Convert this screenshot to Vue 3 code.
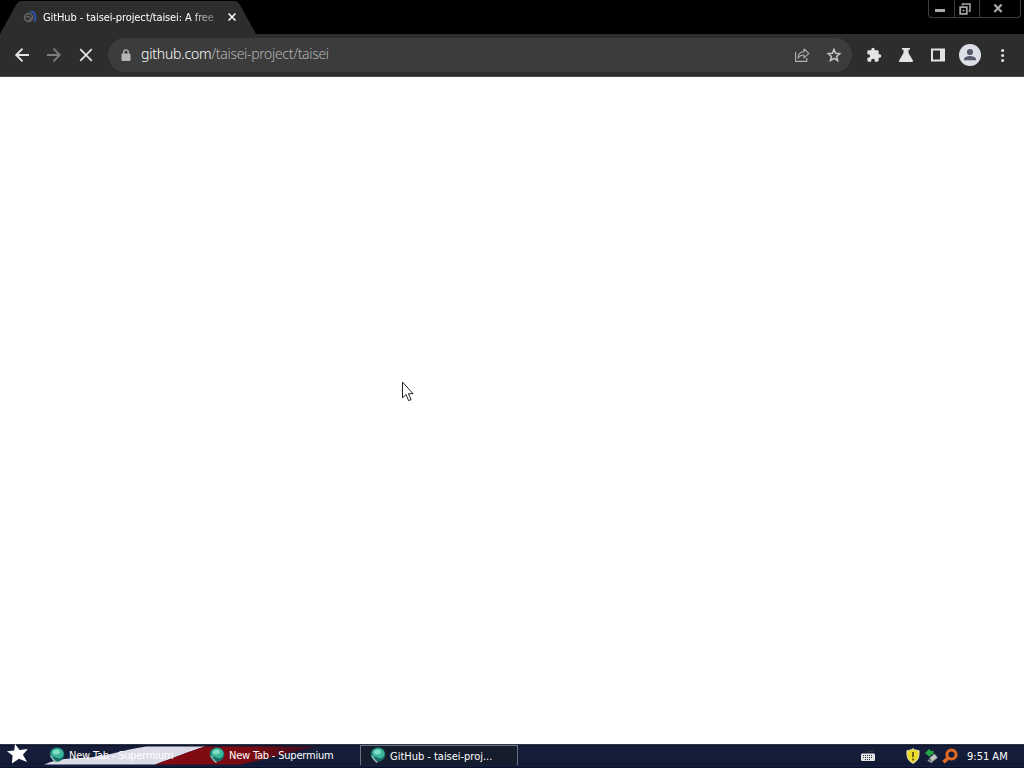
<script setup>
const tasks = [
  { title: 'New Tab - Supermium', active: false },
  { title: 'New Tab - Supermium', active: false },
  { title: 'GitHub - taisei-proj...', active: true },
]
</script>

<template>
  <div class="desktop">
    <header class="titlebar">
      <div class="tab">
        <svg class="tab-shape" width="256" height="34" viewBox="0 0 256 34">
          <path d="M0 34 16 5Q18 1 22 1H234Q238 1 240 5L256 34Z" fill="#2d2d2d" />
        </svg>
        <svg class="favicon" width="14" height="14" viewBox="0 0 14 14" fill="none">
          <circle cx="5.500" cy="7.500" r="4" stroke="#6c6c6c" stroke-width="1.400" />
          <path d="M3 7.500 5 6l1.500 1.500 2 .5L6 10.500" stroke="#6c6c6c" stroke-width="1.200" />
          <path d="M7.500 1.500C11.500 1.500 13.500 6 11.600 11.500" stroke="#2c54ae" stroke-width="2" />
        </svg>
        <span class="tab-title">GitHub - taisei-project/taisei: A free</span>
        <svg class="tab-close" width="10" height="10" viewBox="0 0 10 10">
          <path d="M1.500 1.500l7 7M8.500 1.500l-7 7" stroke="#f2f2f2" stroke-width="1.700" />
        </svg>
      </div>
      <div class="controls">
        <div class="control min"><i></i></div>
        <div class="control restore">
          <svg width="12" height="12" viewBox="0 0 12 12" fill="none" stroke="#a5a5a5">
            <path d="M3.500 2.500V1H11V8H9.500" stroke-width="1.500" />
            <path d="M1.200 4.200h6.600v6.600H1.200z" stroke-width="1.800" />
            <path d="M4 7h1v1H4z" stroke-width="1" />
          </svg>
        </div>
        <div class="control close">
          <svg width="10" height="9" viewBox="0 0 10 9">
            <path d="M1.400.5l7.200 7.600M8.600.5 1.400 8.100" stroke="#aaa" stroke-width="2.200" />
          </svg>
        </div>
      </div>
    </header>

    <nav class="toolbar">
      <svg class="nav" width="16" height="16" viewBox="0 0 16 16" fill="none" stroke="#e4e4e4" stroke-width="1.900">
        <path d="M15 8H2.500M8.500 1.700 2.200 8l6.300 6.300" />
      </svg>
      <svg class="nav" width="16" height="16" viewBox="0 0 16 16" fill="none" stroke="#7d7d7d" stroke-width="1.900">
        <path d="M1 8h12.500M7.500 1.700 13.800 8l-6.300 6.300" />
      </svg>
      <svg class="nav" width="16" height="16" viewBox="0 0 16 16" stroke="#e4e4e4" stroke-width="1.700">
        <path d="M2.200 2.200l11.600 11.600M13.800 2.200 2.200 13.800" />
      </svg>
      <div class="omnibox">
        <svg class="lock" width="10" height="13" viewBox="0 0 10 13">
          <rect x=".5" y="4.500" width="9" height="7.500" rx="1" fill="#b5b5b5" />
          <path d="M2.700 5V3.200a2.300 2.300 0 0 1 4.600 0V5" fill="none" stroke="#b5b5b5" stroke-width="1.300" />
        </svg>
        <span class="url"><b>github.com</b><span class="path">/taisei-project/taisei</span></span>
        <svg class="share" width="16" height="16" viewBox="0 0 16 16" fill="none" stroke="#b0b0b0" stroke-width="1.100">
          <path d="M1.600 5v9.400h11.200V11" />
          <path d="M4 11.200C4 7.200 6 5 10 4.800V2l4.800 4.400-4.800 4.400V8C7.300 8 5.400 9 4 11.200Z" stroke-linejoin="round" />
        </svg>
        <svg class="star" width="16" height="16" viewBox="0 0 16 16" fill="none" stroke="#c6c6c6" stroke-width="1.500">
          <path d="M8 2.500l1.600 3.800 4.200.4-3.200 2.800 1 4.100L8 11.400l-3.600 2.200 1-4.100-3.200-2.800 4.200-.4Z" />
        </svg>
      </div>
      <svg class="tool puzzle" width="16" height="16" viewBox="0 0 24 24" fill="#e4e4e4">
        <path d="M20.500 11H19V7a2 2 0 0 0-2-2h-4V3.500a2.500 2.500 0 0 0-5 0V5H4a2 2 0 0 0-2 2v3.800h1.500a2.700 2.700 0 0 1 0 5.400H2V20a2 2 0 0 0 2 2h3.800v-1.500a2.700 2.700 0 0 1 5.400 0V22H17a2 2 0 0 0 2-2v-4h1.500a2.500 2.500 0 0 0 0-5Z" />
      </svg>
      <svg class="tool" width="16" height="16" viewBox="0 0 16 16" fill="#e4e4e4">
        <path d="M4 1h8v1.800h-1.500V6l4.300 7.200c.5.900 0 1.800-1 1.800H2.200c-1 0-1.500-.9-1-1.800L5.500 6V2.800H4Z" />
      </svg>
      <svg class="tool" width="16" height="16" viewBox="0 0 16 16">
        <path fill="#e4e4e4" fill-rule="evenodd" d="M1 1.500h14v13H1ZM3 3.500v9h7v-9Z" />
      </svg>
      <svg class="avatar" width="22" height="22" viewBox="0 0 22 22">
        <circle cx="11" cy="11" r="11" fill="#dcdfe8" />
        <circle cx="11" cy="8" r="3.100" fill="#535969" />
        <path d="M5 16.300v-1.100c0-2 3.700-3.200 6-3.200s6 1.200 6 3.200v1.100Z" fill="#535969" />
      </svg>
      <svg class="more" width="4" height="16" viewBox="0 0 4 16" fill="#e4e4e4">
        <circle cx="1.600" cy="3.500" r="1.500" /><circle cx="1.600" cy="8.500" r="1.500" /><circle cx="1.600" cy="13.500" r="1.500" />
      </svg>
    </nav>

    <main class="page">
      <svg class="cursor" width="13" height="21" viewBox="0 0 13 21">
        <path d="M1.500 1v16l3.500-3.500L7.600 19.600l2.500-1-2.700-5.900H12Z" fill="#fff" stroke="#222" stroke-width="1" />
      </svg>
    </main>

    <footer class="taskbar">
      <svg class="flag" width="360" height="24" viewBox="0 0 360 24">
        <defs>
          <linearGradient id="fade" x1="0" x2="1">
            <stop offset="0" stop-color="#850a12" />
            <stop offset=".6" stop-color="#780a12" />
            <stop offset="1" stop-color="#321022" />
          </linearGradient>
        </defs>
        <path d="M44 20.500C58 15 66 14.500 82 14C108 12.500 122 6 146 2.500H205C190 7 174 14 155 20.500Z" fill="#dcdce8" />
        <path d="M155 20.500C174 14 190 7 205 2.500H318C294 7 272 14 240 20.500Z" fill="url(#fade)" />
        <path d="M15 0l4.600 6 8.200-1-4.900 5.800 4.200 7.200-8.200-3.200-7 4.600.7-7.900-5.600-4.200 7.200-.7Z" fill="#fff" />
      </svg>
      <div class="tasks">
        <div v-for="(task, i) in tasks" :key="i" class="task" :class="{ active: task.active }">
          <svg width="16" height="17" viewBox="0 0 16 17">
            <circle cx="8" cy="7.500" r="7.300" fill="#176b65" />
            <path d="M2 5C5 0 13 0 14.500 6c0 4-3 6.500-6 5L3 9Z" fill="#3bb59c" />
            <path d="M4 4.500c2-3 7-2.500 7 1-1 2.500-5 2.500-7 1Z" fill="#80dfc3" />
            <path d="M1.500 9c2 .5 2.500 5 6 6.500" fill="none" stroke="#a0bdbc" stroke-width="1.300" />
          </svg>
          <span>{{ task.title }}</span>
        </div>
      </div>
      <div class="tray">
        <svg class="keyboard" width="14" height="13" viewBox="0 0 14 13">
          <path d="M7 5V2.500h5V0" stroke="#30343f" fill="none" />
          <rect y="4.500" width="14" height="7.500" rx="1" fill="#e4e4e4" />
          <path d="M2 6.500h10M2 8.500h10M4 10.500h6" stroke="#333844" stroke-dasharray="1 1" />
        </svg>
        <svg class="shield" width="14" height="16" viewBox="0 0 14 16">
          <path d="M7 .7c2 1.500 4 1.800 6 1.800C13.500 9 12 13 7 15.300 2 13 .5 9 1 2.500 3 2.500 5 2.200 7 .7Z" fill="#eadb28" stroke="#e5e3ba" />
          <path d="M7 4v5M7 10.500v2" stroke="#494414" stroke-width="1.600" />
        </svg>
        <svg class="usb" width="14" height="16" viewBox="0 0 14 16">
          <path d="M4.500 10l5-4 3 3.500-5.500 4.500Z" fill="#c6cbc8" stroke="#727d80" />
          <path d="M3 12l4 2.500" stroke="#8a9698" stroke-width="2" />
          <path d="M0 5 4.500.8 5.500 3H8.500v3.500H6L5 9Z" fill="#29a943" />
        </svg>
        <svg class="search" width="16" height="16" viewBox="0 0 16 16" fill="none" stroke="#e06a22">
          <circle cx="9.500" cy="6.500" r="4.600" stroke-width="3" />
          <path d="M6 10 1.500 14.300" stroke-width="3.600" />
        </svg>
        <span class="clock">9:51 AM</span>
      </div>
    </footer>
  </div>
</template>

<style>
body { margin: 0; overflow: hidden; }
</style>

<style scoped>
* { box-sizing: border-box; }
.desktop {
  width: 1024px; height: 768px;
  display: flex; flex-direction: column;
  background: #fff; color: #fff;
  font: 11px "DejaVu Sans Condensed", "DejaVu Sans", sans-serif;
}
svg { display: block; flex: none; }
.titlebar { height: 34px; background: #000; display: flex; justify-content: space-between; align-items: flex-start; }
.tab { width: 256px; height: 34px; position: relative; display: flex; align-items: center; padding-left: 23px; }
.tab-shape { position: absolute; inset: 0; }
.favicon, .tab-title, .tab-close { position: relative; }
.tab-title {
  width: 172px; margin-left: 6px; padding-top: 1px; white-space: nowrap; overflow: hidden; line-height: 16px; letter-spacing: -0.1px;
  -webkit-mask-image: linear-gradient(90deg, #000 85%, rgba(0, 0, 0, .3));
  mask-image: linear-gradient(90deg, #000 85%, rgba(0, 0, 0, .3));
}
.tab-close { margin-left: 12px; }
.controls { height: 18px; width: 93px; margin-right: 3px; border: 1px solid #3c3c3c; border-top: 0; border-radius: 0 0 4px 4px; display: flex; }
.control { display: flex; align-items: center; justify-content: center; width: 25px; }
.control + .control { border-left: 1px solid #3c3c3c; }
.control.close { width: 41px; padding-right: 4px; }
.control.restore { padding-right: 5px; }
.min i { width: 10px; height: 3px; background: #aaa; margin-top: 3px; margin-right: 4px; }
.toolbar { height: 43px; background: #2d2d2d; border-bottom: 1px solid #4b4b4b; display: flex; align-items: center; padding-left: 14px; }
.nav { margin-right: 16px; }
.omnibox { height: 34px; width: 744px; margin-left: -2px; margin-right: 14px; border-radius: 17px; background: #3c3c3c; display: flex; align-items: center; padding-left: 13px; }
.url { margin-left: 10px; width: 640px; font: 300 14px/18px "Noto Sans", "Open Sans", sans-serif; color: #b4b4b4; letter-spacing: -0.2px; margin-top: -2px; white-space: nowrap; }
.url b { font-weight: 300; color: #fff; }
.path { letter-spacing: -0.33px; }
.share { margin-left: 13px; }
.star { margin-left: 16px; }
.tool { margin-right: 16px; }
.avatar { margin-left: -3px; }
.more { margin-left: 20px; }
.page { flex: 1; background: #fff; position: relative; }
.cursor { position: absolute; left: 401px; top: 304px; }
.taskbar { height: 24px; position: relative; background: linear-gradient(#50566a 0, #0d1326 1px, #161e3a 3px, #141b36 19px, #0c142b 20px, #132049 22px, #070b18 24px); display: flex; align-items: flex-start; justify-content: space-between; }
.flag { position: absolute; left: 0; top: 0; }
.tasks { position: relative; display: flex; gap: 2px; padding-left: 40px; }
.task { width: 158px; height: 20px; margin-top: 1px; display: flex; align-items: center; padding-left: 9px; }
.task span { margin-left: 4px; padding-top: 1px; letter-spacing: -0.2px; line-height: 16px; white-space: nowrap; }
.task.active { border: 1px solid #697284; border-bottom: 0; background: #151c2b; }
.task.active span { letter-spacing: -0.02px; padding-top: 2px; }
.tray { position: relative; display: flex; align-items: center; width: 163px; height: 24px; }
.keyboard { margin-top: -1px; }
.shield { margin-left: 31px; }
.usb { margin-left: 5px; }
.search { margin-left: 3px; }
.clock { margin-left: 9px; padding-top: 1px; letter-spacing: 0; white-space: nowrap; }
</style>
